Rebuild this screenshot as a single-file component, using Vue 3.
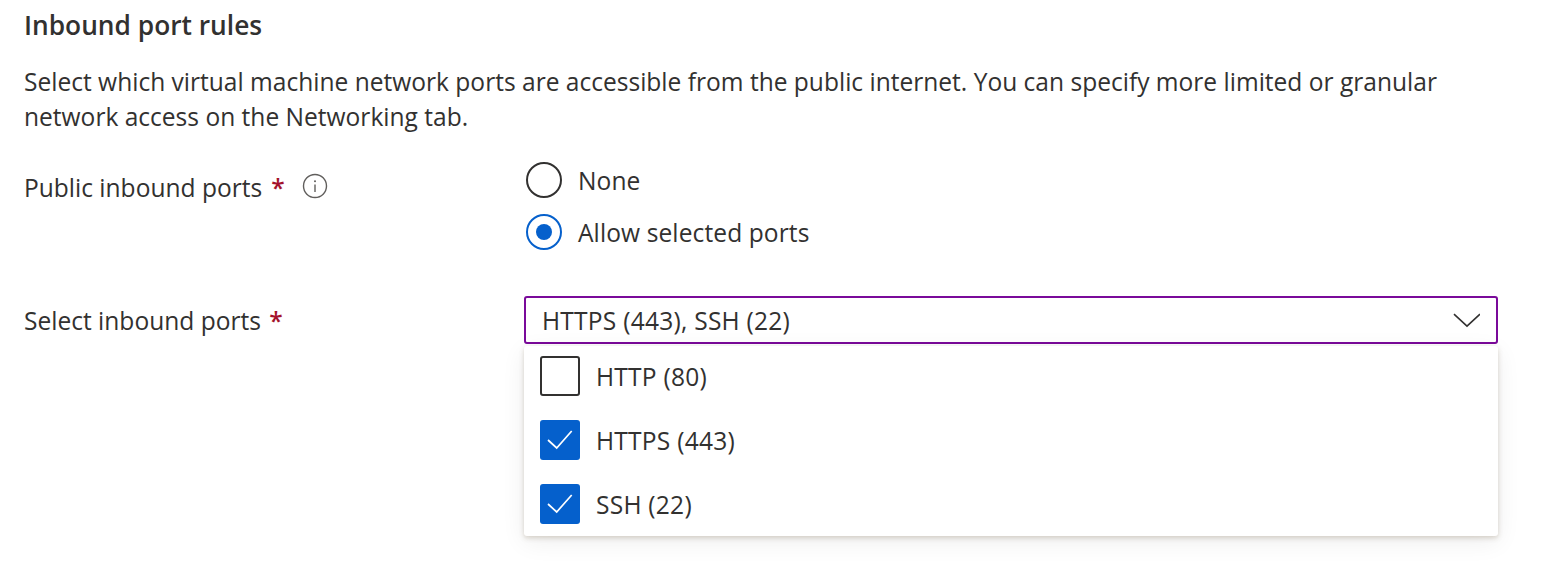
<script setup>
const ports = [
  { id: 'http', label: 'HTTP (80)', checked: false },
  { id: 'https', label: 'HTTPS (443)', checked: true },
  { id: 'ssh', label: 'SSH (22)', checked: true }
];
</script>

<template>
  <section class="page">
    <h2 class="title">Inbound port rules</h2>
    <p class="intro">
      Select which virtual machine network ports are accessible from the public internet. You can specify more limited or granular<br />
      network access on the Networking tab.
    </p>

    <div class="row row-radio">
      <div class="label label-radio">
        Public inbound ports <span class="req">*</span>
        <svg class="info" width="26" height="26" viewBox="0 0 26 26">
          <circle cx="13" cy="13" r="11.5" fill="none" stroke="#605e5c" stroke-width="1.4" />
          <circle cx="13" cy="8.3" r="1" fill="#605e5c" />
          <path d="M13 11.5v7.5" stroke="#605e5c" stroke-width="1.4" />
        </svg>
      </div>
      <div class="radios">
        <label class="radio"><span class="dot"></span>None</label>
        <label class="radio selected"><span class="dot"></span>Allow selected ports</label>
      </div>
    </div>

    <div class="row row-select">
      <div class="label">Select inbound ports <span class="req">*</span></div>
      <div class="select-wrap">
        <div class="select">
          <span>HTTPS (443), SSH (22)</span>
          <svg width="28" height="16" viewBox="0 0 28 16">
            <path d="M2 2.2L15 14.2 28 2.2" fill="none" stroke="#323130" stroke-width="1.6" />
          </svg>
        </div>
        <ul class="menu">
          <li v-for="port in ports" :key="port.id" class="option">
            <span class="box" :class="{ checked: port.checked }">
              <svg v-if="port.checked" width="26" height="22" viewBox="0 0 26 22">
                <path d="M1 11l8.7 8L24.7 2" fill="none" stroke="#fff" stroke-width="1.7" />
              </svg>
            </span>
            {{ port.label }}
          </li>
        </ul>
      </div>
    </div>
  </section>
</template>

<style>
body {
  background: #fff;
}
</style>

<style scoped>
.page {
  height: 576px;
  box-sizing: border-box;
  padding: 7px 50px 0 24px;
  font-family: "Open Sans", "Noto Sans", sans-serif;
  font-size: 24.55px;
  color: #323130;
  overflow: hidden;
}

.title {
  margin: 0;
  font-size: 26.3px;
  line-height: 36px;
  font-weight: 600;
}

.intro {
  margin: 21px 0 0;
  line-height: 35px;
  white-space: nowrap;
}

.row {
  display: grid;
  grid-template-columns: 500px 974px;
}

.row-radio {
  margin-top: 28px;
}

.row-select {
  margin-top: 46px;
}

.label {
  line-height: 50px;
  white-space: nowrap;
}

.label-radio {
  display: flex;
  align-items: center;
  gap: 7px;
  height: 48px;
  margin-top: 2px;
  line-height: 48px;
}

.req {
  color: #a4122c;
  font-weight: 600;
  margin-left: 2px;
}

.info {
  margin: -4px 0 0 10px;
}

.radios {
  display: flex;
  flex-direction: column;
  gap: 16px;
}

.radio {
  display: flex;
  align-items: center;
  gap: 16px;
  height: 36px;
  padding-left: 2px;
  letter-spacing: 0.1px;
}

.dot {
  width: 36px;
  height: 36px;
  box-sizing: border-box;
  border: 2px solid #323130;
  border-radius: 50%;
  position: relative;
}

.radio.selected .dot {
  border-color: #0560cc;
}

.radio.selected .dot::after {
  content: '';
  position: absolute;
  left: 8px;
  top: 8px;
  width: 16px;
  height: 16px;
  border-radius: 50%;
  background: #0560cc;
}

.select-wrap {
  position: relative;
}

.select {
  height: 48px;
  box-sizing: border-box;
  border: 2px solid #7a0a9a;
  border-radius: 3px;
  padding: 0 16px;
  display: flex;
  align-items: center;
  justify-content: space-between;
  letter-spacing: 0.24px;
}

.menu {
  position: absolute;
  left: 0;
  right: 0;
  top: 50px;
  height: 190px;
  box-sizing: border-box;
  margin: 0;
  padding: 0 16px;
  list-style: none;
  display: flex;
  flex-direction: column;
  gap: 4px;
  background: #fff;
  border-radius: 3px;
  box-shadow: 0 2px 5px rgba(110, 90, 60, 0.25), 0 6px 24px rgba(0, 0, 0, 0.07);
}

.option {
  height: 60px;
  display: flex;
  align-items: center;
  gap: 16px;
  letter-spacing: 0.24px;
}

.box {
  width: 40px;
  height: 40px;
  box-sizing: border-box;
  border: 2px solid #323130;
  border-radius: 3px;
  display: flex;
  align-items: center;
  justify-content: center;
}

.box.checked {
  border: none;
  background: #0560cc;
}
</style>
